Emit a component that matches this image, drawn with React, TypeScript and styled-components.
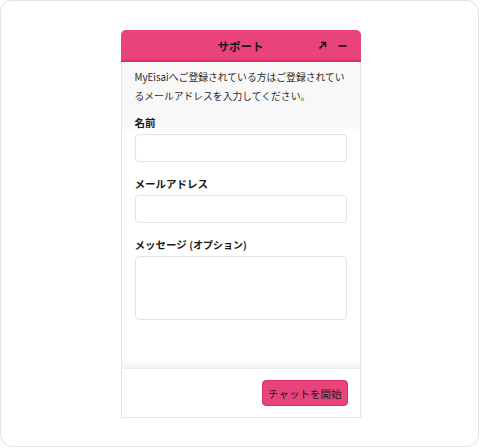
import React from "react";
import styled, { createGlobalStyle } from "styled-components";

const GlobalStyle = createGlobalStyle`
    html, body {
        margin: 0;
        padding: 0;
        background: #ffffff;
    }
    body {
        font-family: "Noto Sans CJK JP", "Noto Sans", sans-serif;
        color: #222;
    }
`;

const Frame = styled.div`
    box-sizing: border-box;
    width: 479px;
    height: 447px;
    border: 1px solid #e4e4e4;
    border-radius: 12px;
    background: #fff;
    padding-top: 29px;
    display: flex;
    justify-content: center;
`;

const Widget = styled.div`
    box-sizing: border-box;
    width: 240px;
    height: 388px;
    margin-left: 2px;
    display: flex;
    flex-direction: column;
    border: 1px solid #e6e6e6;
    border-top: none;
    border-radius: 5px 5px 0 0;
    background: #fff;
`;

const Header = styled.div`
    position: relative;
    height: 32px;
    margin: 0 -1px;
    display: flex;
    align-items: center;
    justify-content: center;
    background: #e8437a;
    border-bottom: 2px solid #dc2f66;
    border-radius: 5px 5px 0 0;
    box-sizing: border-box;
    padding-top: 2px;
`;

const Title = styled.div`
    font-size: 11.5px;
    font-weight: 700;
    color: #1a1a1a;
`;

const HeaderActions = styled.div`
    position: absolute;
    right: 14px;
    top: 0;
    bottom: 0;
    display: flex;
    align-items: center;
    gap: 11px;
`;

const Body = styled.div`
    flex: 1;
    padding: 6px 13px 0 13px;
    display: flex;
    flex-direction: column;
    background: linear-gradient(#f8f8f8 0, #f8f8f8 62px, #ffffff 72px, #ffffff calc(100% - 8px), #f3f3f3 100%);
`;

const Intro = styled.p`
    margin: 0 0 10px 0;
    font-size: 9.8px;
    line-height: 19px;
    color: #2a2a2a;
`;

const Field = styled.div`
    display: flex;
    flex-direction: column;
    margin-bottom: 15px;
`;

const Label = styled.label`
    font-size: 10.5px;
    font-weight: 700;
    color: #1a1a1a;
    line-height: 14px;
    margin-bottom: 4px;
`;

const Optional = styled.span`
    font-size: 10px;
`;

const Input = styled.input`
    box-sizing: border-box;
    width: 212px;
    height: 28px;
    border: 1px solid #e2e2e2;
    border-radius: 4px;
    background: #fff;
`;

const TextArea = styled.textarea`
    box-sizing: border-box;
    width: 212px;
    height: 64px;
    border: 1px solid #e2e2e2;
    border-radius: 4px;
    background: #fff;
    resize: none;
`;

const Footer = styled.div`
    height: 49px;
    border-top: 1px solid #ececec;
    display: flex;
    align-items: center;
    justify-content: flex-end;
    padding-right: 12px;
    box-sizing: border-box;
`;

const StartButton = styled.button`
    height: 26px;
    padding: 0 5px;
    border: 1px solid #d63167;
    border-radius: 4px;
    background: #e8437a;
    font-family: "Noto Sans CJK JP", "Noto Sans", sans-serif;
    font-size: 10.5px;
    color: #1a1a1a;
`;

export default function App() {
    return (
        <>
            <GlobalStyle />
            <Frame>
                <Widget>
                    <Header>
                        <Title>サポート</Title>
                        <HeaderActions>
                            <svg width="9" height="9" viewBox="0 0 9 9">
                                <path d="M1.5 7.5 L7.5 1.5 M3 1.5 H7.5 V6" stroke="#111" strokeWidth="1.6" fill="none" />
                            </svg>
                            <svg width="9" height="9" viewBox="0 0 9 9">
                                <path d="M0.5 5 H8.5" stroke="#111" strokeWidth="1.6" />
                            </svg>
                        </HeaderActions>
                    </Header>
                    <Body>
                        <Intro>MyEisaiへご登録されている方はご登録されているメールアドレスを入力してください。</Intro>
                        <Field>
                            <Label>名前</Label>
                            <Input />
                        </Field>
                        <Field>
                            <Label>メールアドレス</Label>
                            <Input />
                        </Field>
                        <Field>
                            <Label>
                                メッセージ <Optional>(オプション)</Optional>
                            </Label>
                            <TextArea />
                        </Field>
                    </Body>
                    <Footer>
                        <StartButton>チャットを開始</StartButton>
                    </Footer>
                </Widget>
            </Frame>
        </>
    );
}
